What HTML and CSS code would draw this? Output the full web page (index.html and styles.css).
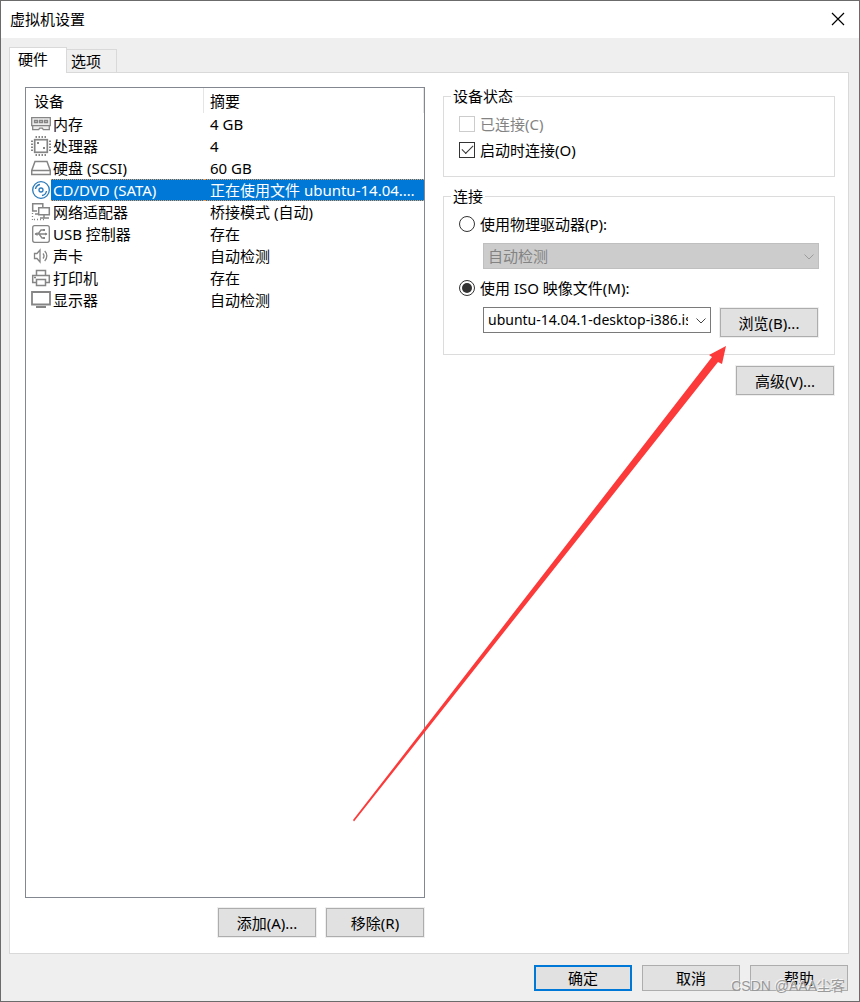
FILE: index.html
```html
<!DOCTYPE html>
<html lang="zh-CN">
<head>
    <meta charset="UTF-8">
    <meta name="viewport" content="width=device-width, initial-scale=1.0">
    <title>虚拟机设置</title>
    <link rel="stylesheet" href="styles.css">
</head>
<body>
    <div class="window">
        <header class="titlebar">
            <h1>虚拟机设置</h1>
            <button class="close" aria-label="关闭">
                <svg width="14" height="14" viewBox="0 0 14 14"><path d="M1 1L13 13M13 1L1 13" stroke="#000" stroke-width="1.2"/></svg>
            </button>
        </header>

        <div class="tabs" role="tablist">
            <button class="tab active" role="tab" aria-selected="true">硬件</button>
            <button class="tab" role="tab" aria-selected="false">选项</button>
        </div>

        <main class="panel">
            <section class="hardware">
                <div class="device-list">
                    <table>
                        <colgroup>
                            <col class="col-icon">
                            <col class="col-name">
                            <col>
                        </colgroup>
                        <thead>
                            <tr><th colspan="2">设备</th><th>摘要</th></tr>
                        </thead>
                        <tbody>
                            <tr>
                                <td class="icon"><svg viewBox="0 0 20 20"><path d="M.7 3.700h18.600v8h-1v4h-6l-1-1.500h-2.600l-1 1.500H1.700v-4h-1zM1 11.700h18" fill="#eee"/><path d="M3.500 6.500h3v2h-3zM8.500 6.500h3v2h-3zM13.500 6.500h3v2h-3z"/></svg></td>
                                <td>内存</td><td>4 GB</td>
                            </tr>
                            <tr>
                                <td class="icon"><svg viewBox="0 0 20 20"><rect x="3.700" y="3.700" width="12.600" height="12.600" stroke-width="1.700"/><path d="M4.500 1h11M4.500 19h11M1 4.500v11M19 4.500v11" stroke-width="2" stroke-dasharray="1.500 1.500"/><path d="M6 6h2v2H6zM12 11h2v2h-2z" class="solid"/></svg></td>
                                <td>处理器</td><td>4</td>
                            </tr>
                            <tr>
                                <td class="icon"><svg viewBox="0 0 20 20"><path d="M4 3.500h12l3.300 9v4H.7v-4zM.7 12.500h18.600" stroke-width="1.500"/></svg></td>
                                <td>硬盘 (SCSI)</td><td>60 GB</td>
                            </tr>
                            <tr class="selected">
                                <td class="icon"><svg viewBox="0 0 20 20" class="disc"><circle cx="10" cy="10" r="8.300"/><circle cx="10" cy="10" r="2"/><path d="M4.500 9a5.500 5.500 0 0 1 4.500-4.500M15.500 11a5.500 5.500 0 0 1-4.500 4.500"/></svg></td>
                                <td>CD/DVD (SATA)</td><td>正在使用文件 ubuntu-14.04.1-desktop-i386.iso</td>
                            </tr>
                            <tr>
                                <td class="icon"><svg viewBox="0 0 20 20"><path d="M6 9H1.700V1.700h10.100V5M4 12h4" stroke-width="1.500"/><path d="M7.700 5.700h10.600v7.100H7.700zM13 13v3M9 16h9" stroke-width="1.500"/><path d="M1.500 11v7M3 17.500h10" stroke-dasharray="1 2"/></svg></td>
                                <td>网络适配器</td><td>桥接模式 (自动)</td>
                            </tr>
                            <tr>
                                <td class="icon"><svg viewBox="0 0 20 20"><rect x="1.700" y="1.700" width="16.600" height="16.600" rx="2"/><path d="M4 10h12M7 10l3-4h3M8 10l3 4h2"/><path d="M3.500 10l3-2v4zM12 5h2v2h-2zM12 13h2v2h-2zM14 8.500l2.500 1.500-2.500 1.500z" class="solid"/></svg></td>
                                <td>USB 控制器</td><td>存在</td>
                            </tr>
                            <tr>
                                <td class="icon"><svg viewBox="0 0 20 20"><path d="M3.500 7.500h2.500l3-3.500v12l-3-3.500H3.500zM12 7.500a4 4 0 0 1 0 5M13.700 5a7 7 0 0 1 0 10"/></svg></td>
                                <td>声卡</td><td>自动检测</td>
                            </tr>
                            <tr>
                                <td class="icon"><svg viewBox="0 0 20 20"><path d="M5.500 7V2.500h9V7M5 14.500H1.700v-7h16.600v7H15M5.500 11.500h9v6h-9z" stroke-width="1.500"/><path d="M3 9.500h2"/></svg></td>
                                <td>打印机</td><td>存在</td>
                            </tr>
                            <tr>
                                <td class="icon"><svg viewBox="0 0 20 20"><path d="M1 2h18v12.500H1zM5 17h10" stroke-width="1.800"/></svg></td>
                                <td>显示器</td><td>自动检测</td>
                            </tr>
                        </tbody>
                    </table>
                </div>
                <div class="actions">
                    <button class="btn">添加(A)...</button>
                    <button class="btn">移除(R)</button>
                </div>
            </section>

            <section class="settings">
                <fieldset>
                    <legend>设备状态</legend>
                    <label class="option disabled"><input type="checkbox" disabled>已连接(C)</label>
                    <label class="option"><input type="checkbox" checked>启动时连接(O)</label>
                </fieldset>

                <fieldset class="connection">
                    <legend>连接</legend>
                    <label class="option"><input type="radio" name="source">使用物理驱动器(P):</label>
                    <div class="combo">
                        <select aria-label="物理驱动器" disabled><option>自动检测</option></select>
                        <svg class="chevron" viewBox="0 0 10 6"><path d="M.5 .5L5 5L9.500 .5"/></svg>
                    </div>
                    <label class="option"><input type="radio" name="source" checked>使用 ISO 映像文件(M):</label>
                    <div class="iso-row">
                        <div class="combo">
                            <select class="iso-file" aria-label="ISO 映像文件"><option>ubuntu-14.04.1-desktop-i386.iso</option></select>
                            <svg class="chevron" viewBox="0 0 10 6"><path d="M.5 .5L5 5L9.500 .5"/></svg>
                        </div>
                        <button class="btn">浏览(B)...</button>
                    </div>
                </fieldset>

                <div class="actions">
                    <button class="btn">高级(V)...</button>
                </div>
            </section>
        </main>

        <footer class="footer">
            <button class="btn default">确定</button>
            <button class="btn">取消</button>
            <button class="btn">帮助</button>
        </footer>

        <!-- Arrow pointing at the browse button -->
        <svg class="arrow" viewBox="353 346 374 476"><polygon points="353,820 712,357 709,355 726,346 722,364 718,362 354,821.500"/></svg>
        <span class="watermark">CSDN @AAA尘客</span>
    </div>
</body>
</html>
```
FILE: styles.css
```css
* {
    box-sizing: border-box;
}

body {
    margin: 0;
    font-family: "Noto Sans", "Noto Sans CJK SC", sans-serif;
    font-size: 15px;
    line-height: 20px;
    color: #000;
}

button, select {
    font: inherit;
    color: inherit;
}

.window {
    position: relative;
    display: flex;
    flex-direction: column;
    min-height: 100vh;
    border: 1px solid #6b6b6b;
    background-color: #efefef;
}

.titlebar {
    display: flex;
    align-items: center;
    justify-content: space-between;
    height: 37px;
    padding: 0 7px 2px 9px;
    background-color: #fff;
}

.titlebar h1 {
    margin: 0;
    font-size: 15px;
    font-weight: 400;
}

.close {
    display: flex;
    padding: 7px;
    border: 0;
    background: none;
}

/* Tabs */
.tabs {
    display: flex;
    align-items: flex-end;
    margin-top: 9px;
    padding: 0 8px;
}

.tab {
    height: 23px;
    width: 50px;
    padding: 0 4px;
    border: 1px solid #d9d9d9;
    border-width: 1px 1px 0 0;
    background-color: #efefef;
    text-align: left;
}

.tab.active {
    position: relative;
    z-index: 1;
    width: 58px;
    height: 26px;
    margin-bottom: -1px;
    padding: 0 8px 3px;
    border-width: 1px 1px 0;
    background-color: #fff;
}

.panel {
    flex: 1;
    display: grid;
    grid-template-columns: 400fr 392fr;
    gap: 18px;
    margin: 0 10px 0 8px;
    padding: 14px 13px 15px 15px;
    border: 1px solid #d9d9d9;
    background-color: #fff;
}

/* Device list */
.hardware {
    display: flex;
    flex-direction: column;
    gap: 9px;
    min-width: 0;
}

.device-list {
    flex: 1;
    border: 1px solid #828790;
}

table {
    width: 100%;
    table-layout: fixed;
    border-collapse: separate;
    border-spacing: 0;
}

.col-icon {
    width: 25px;
}

.col-name {
    width: 153px;
}

th {
    height: 25px;
    padding: 0 6px;
    border-right: 1px solid #e5e5e5;
    font-weight: 400;
    text-align: left;
}

th:first-child {
    padding-left: 8px;
}

td {
    height: 22px;
    padding: 0 6px;
    border: 0 dotted #f0a050;
    line-height: 20px;
    overflow: hidden;
    white-space: nowrap;
    text-overflow: ellipsis;
}

td:nth-child(2) {
    padding-left: 2px;
}

td.icon {
    padding: 0 0 0 5px;
    overflow: visible;
}

.icon svg {
    display: block;
    width: 20px;
    height: 20px;
    fill: none;
    stroke: #858585;
    stroke-width: 1.3;
}

.icon .solid {
    fill: #858585;
    stroke: none;
}

.icon .disc {
    stroke: #2b79b9;
}

.selected td:not(.icon) {
    border-width: 1px 0;
    background-color: #0078d7;
    color: #fff;
}

/* Buttons */
.actions {
    display: flex;
    justify-content: flex-end;
    gap: 8px;
}

.btn {
    width: 98px;
    height: 29px;
    margin: 1px;
    padding: 0;
    border: 1px solid #adadad;
    background-color: #e1e1e1;
    box-shadow: 0 0 0 1px #efefef;
}

.footer {
    display: flex;
    justify-content: flex-end;
    gap: 8px;
    padding: 10px 10px 9px;
}

.footer .btn {
    height: 26px;
}

.btn.default {
    border: 2px solid #0078d7;
}

/* Settings */
fieldset {
    display: flex;
    flex-direction: column;
    min-width: 0;
    margin: 0 0 10px;
    padding: 6px 15px 13px;
    border: 1px solid #dcdcdc;
}

legend {
    margin-left: -8px;
    padding: 0 2px;
    line-height: 18px;
}

.option {
    display: flex;
    align-items: center;
    gap: 5px;
    height: 26px;
}

.option.disabled {
    color: #838383;
}

input {
    appearance: none;
    display: grid;
    place-content: center;
    width: 16px;
    height: 16px;
    margin: 0;
    border: 1px solid #333;
    background-color: #fff;
}

input:disabled {
    border-color: #ccc;
}

input[type="radio"] {
    border-radius: 50%;
}

input[type="radio"]:checked::before {
    content: "";
    width: 10px;
    height: 10px;
    border-radius: 50%;
    background-color: #333;
}

input[type="checkbox"]:checked::before {
    content: "";
    width: 10px;
    height: 5px;
    border: solid #333;
    border-width: 0 0 1px 1px;
    transform: translateY(-2px) rotate(-45deg);
}

.connection {
    gap: 6px;
    padding-bottom: 16px;
}

.combo {
    position: relative;
    flex: 1;
    margin-left: 24px;
}

.combo select {
    appearance: none;
    display: block;
    width: 100%;
    height: 26px;
    padding: 0 22px 0 4px;
    border: 1px solid #7a7a7a;
    border-radius: 0;
    background-color: #fff;
}

.combo select:disabled {
    border-color: #bfbfbf;
    background-color: #ccc;
    color: #838383;
    opacity: 1;
}

.combo .iso-file {
    font-size: 14px;
}

.chevron {
    position: absolute;
    top: 11px;
    right: 5px;
    width: 10px;
    height: 6px;
    fill: none;
    stroke: #444;
    pointer-events: none;
}

select:disabled + .chevron {
    stroke: #9c9c9c;
}

.iso-row {
    display: flex;
    align-items: flex-start;
    gap: 8px;
}

.arrow {
    position: absolute;
    left: 352px;
    top: 345px;
    width: 374px;
    height: 476px;
    fill: #fc3a3a;
    pointer-events: none;
}

.watermark {
    position: absolute;
    right: 14px;
    bottom: 5px;
    font-family: "Liberation Sans", "Noto Sans CJK SC", sans-serif;
    font-size: 14px;
    color: #999;
    text-shadow: -1px -1px 0 #f5f5f5;
    pointer-events: none;
}
```
